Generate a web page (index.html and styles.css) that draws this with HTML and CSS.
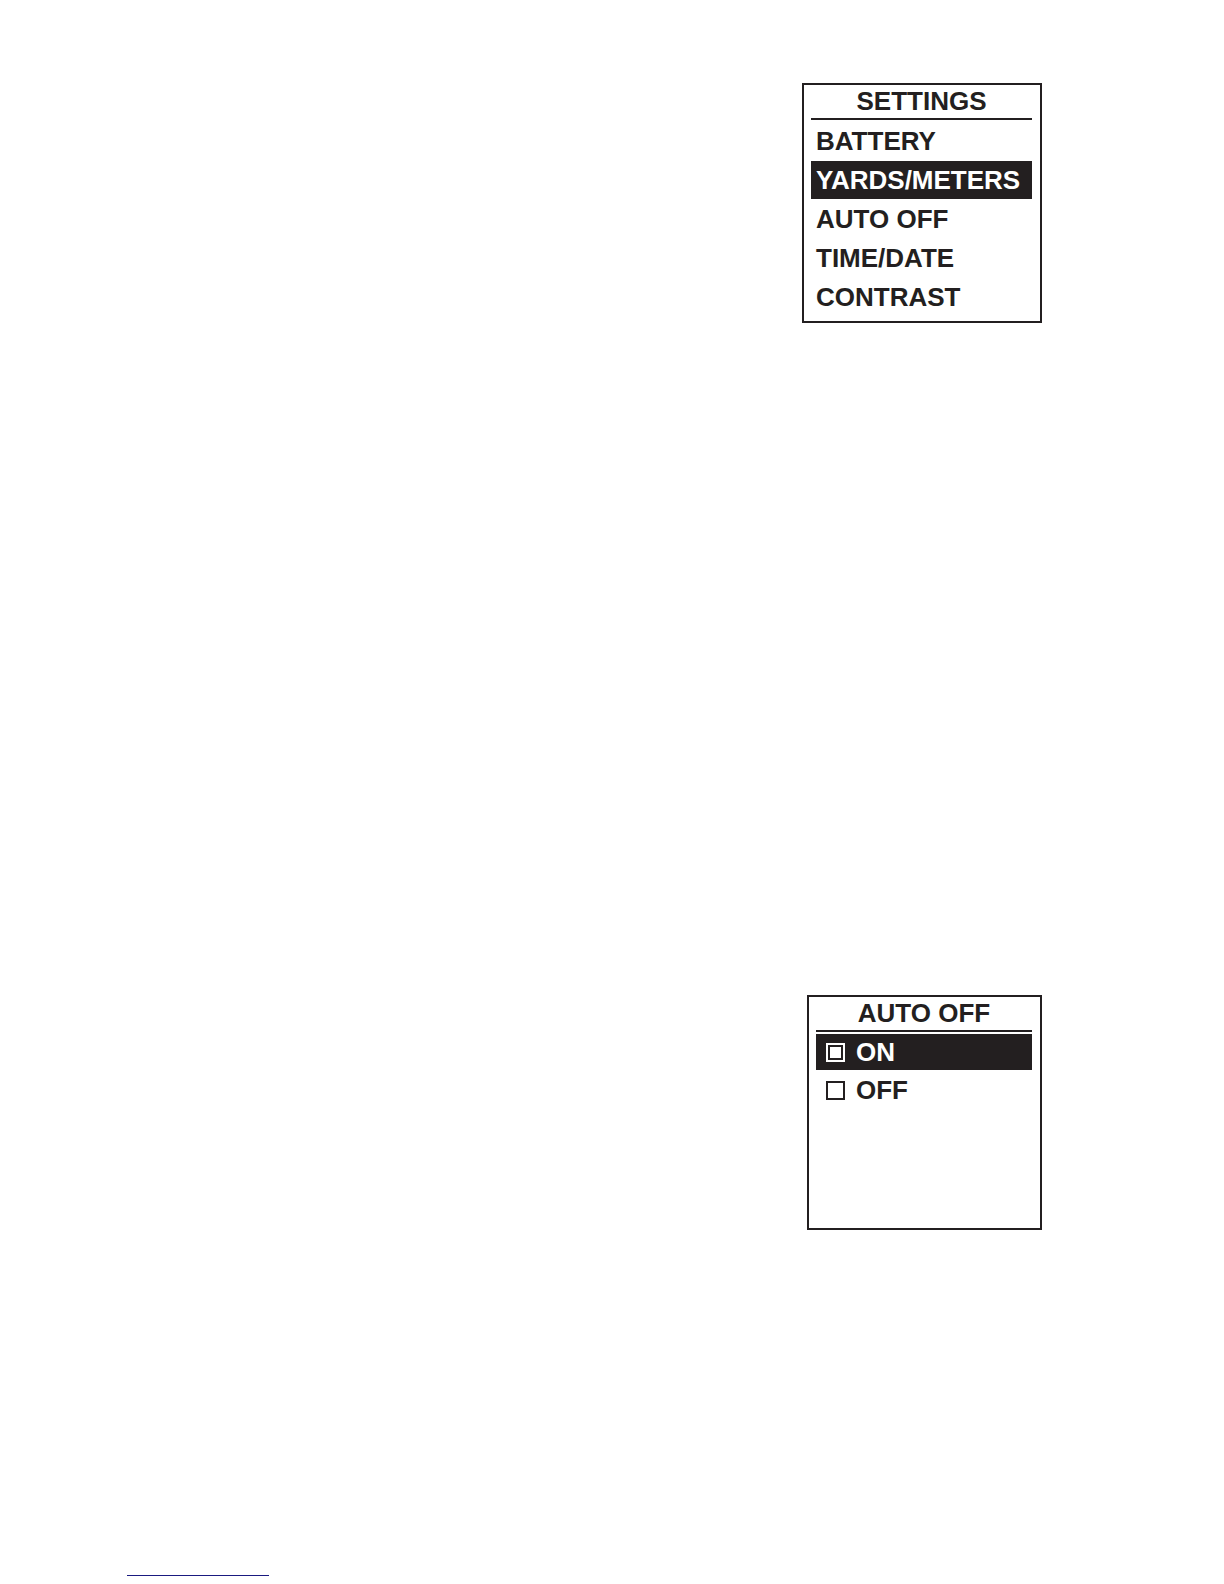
FILE: index.html
```html
<!DOCTYPE html>
<html lang="en">
<head>
    <meta charset="UTF-8">
    <meta name="viewport" content="width=device-width, initial-scale=1.0">
    <title>Settings</title>
    <link rel="stylesheet" href="styles.css">
</head>
<body>
    <main class="page">
        <section class="screen">
            <h2 class="screen-title">SETTINGS</h2>
            <nav class="menu">
                <button class="menu-item">BATTERY</button>
                <button class="menu-item selected">YARDS/METERS</button>
                <button class="menu-item">AUTO OFF</button>
                <button class="menu-item">TIME/DATE</button>
                <button class="menu-item">CONTRAST</button>
            </nav>
        </section>

        <section class="screen screen-small">
            <h2 class="screen-title">AUTO OFF</h2>
            <form class="options">
                <label class="option">
                    <input type="radio" name="auto-off" value="on" checked>
                    ON
                </label>
                <label class="option">
                    <input type="radio" name="auto-off" value="off">
                    OFF
                </label>
            </form>
        </section>

        <hr class="footer-line">
    </main>
</body>
</html>
```

FILE: styles.css
```css
* {
    margin: 0;
    padding: 0;
    box-sizing: border-box;
}

body {
    font-family: "Liberation Sans", Arial, sans-serif;
    background: #fff;
    color: #231f20;
}

.page {
    display: flex;
    flex-direction: column;
    align-items: flex-end;
    min-height: 100vh;
    padding: 83px 182px 8px 127px;
}

.screen {
    width: 240px;
    min-height: 240px;
    padding: 0 8px 0 7px;
    border: 2px solid #231f20;
    font-size: 26px;
    font-weight: bold;
}

.screen-small {
    width: 235px;
    min-height: 235px;
    margin-top: 672px;
}

.screen-title {
    border-bottom: 2px solid #231f20;
    font-size: 26px;
    line-height: 33px;
    text-align: center;
}

.menu {
    display: flex;
    flex-direction: column;
    gap: 1px;
    padding-top: 2px;
}

.menu-item {
    border: none;
    padding: 0 5px;
    background: none;
    color: inherit;
    font: inherit;
    line-height: 38px;
    text-align: left;
    cursor: pointer;
}

.menu-item.selected,
.option:has(:checked) {
    background: #231f20;
    color: #fff;
}

.options {
    display: flex;
    flex-direction: column;
    gap: 2px;
    padding-top: 2px;
}

.option {
    display: flex;
    align-items: center;
    gap: 11px;
    padding: 0 10px;
    line-height: 36px;
    cursor: pointer;
}

.option input {
    appearance: none;
    width: 19px;
    height: 19px;
    border: 2px solid currentColor;
    padding: 2px;
    background-clip: content-box;
    color: inherit;
}

.option input:checked {
    background-color: currentColor;
}

.footer-line {
    align-self: flex-start;
    width: 142px;
    margin-top: auto;
    border: none;
    border-top: 1px solid #1a1a80;
}
```
